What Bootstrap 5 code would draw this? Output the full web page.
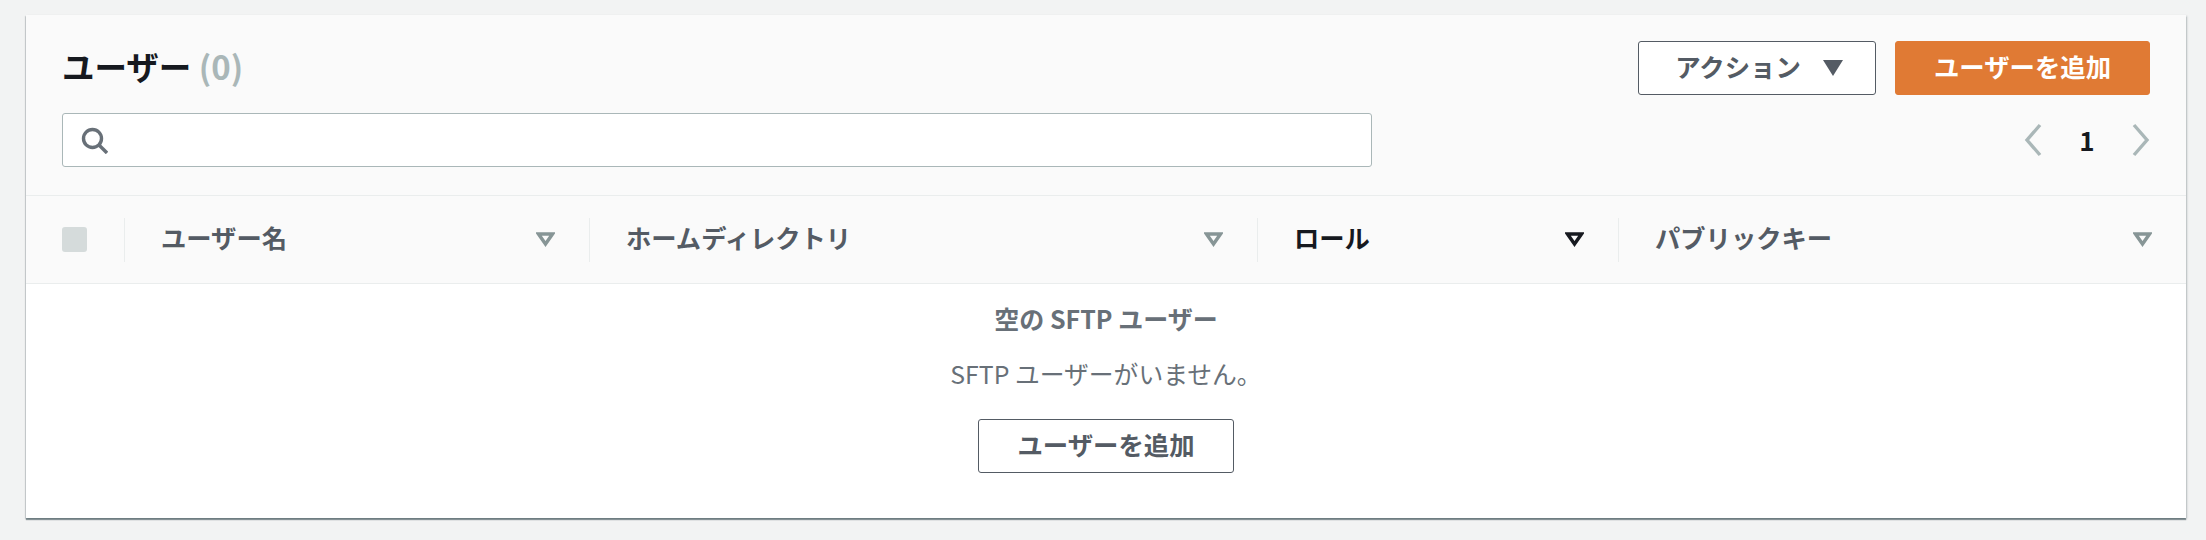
<!DOCTYPE html>
<html lang="ja">
<head>
<meta charset="utf-8">
<title>ユーザー</title>
<link rel="stylesheet" href="https://cdn.jsdelivr.net/npm/bootstrap@5.3.0/dist/css/bootstrap.min.css">
<style>
html,body{height:540px;overflow:hidden}
body{background:#f2f3f3;font-family:"Noto Sans CJK JP","Noto Sans",sans-serif;color:#16191f;padding:15px 20px 0 26px}
.panel{width:2160px;height:503px;background:#fff;border:0;border-radius:0;box-shadow:0 2px 1px 0 rgba(0,28,36,.4),1px 1px 2px 0 rgba(0,28,36,.2),-1px 1px 1px 0 rgba(0,28,36,.12)}
.panel-top{background:#fafafa;padding:26px 36px 28px 36px;border-bottom:1px solid #eaeded}
.title-row{height:54px}
.panel-title{font-size:32.500px;line-height:50px;height:54px;font-weight:700;margin:0;color:#16191f}
.panel-count{color:#aab7b8;font-weight:700;font-size:33px}
.aws-btn{height:54px;font-size:25.400px;font-weight:700;line-height:1;border-radius:3px;padding:0 0 3px;display:inline-flex;align-items:center;justify-content:center;font-family:inherit}
.btn-act{width:238px;background:#fff;color:#545b64;border:1.5px solid #545b64}
.btn-act:hover{background:#fff;color:#545b64}
.btn-act svg{margin-left:22px;margin-right:-4px;margin-top:3px}
.btn-add{width:255px;margin-left:19px;background:#e07a34;color:#fff;border:1px solid #e07a34}
.btn-add:hover{background:#e07a34;color:#fff}
.filter-row{margin-top:18px;height:54px}
.search-box{width:1310px;height:54px;background:#fff;border:1.5px solid #aab7b8;border-radius:3px;padding-left:18px}
.pager{width:126px;color:#16191f}
.pager-num{font-size:26px;font-weight:700;line-height:1}
.table-head{height:88px;background:#fafafa;border-bottom:1px solid #eaeded}
.cell{height:44px;border-left:1px solid #eaeded;font-size:25.300px;font-weight:700;color:#545b64;padding:0 34px 0 36px}
.cell span{margin-top:-4px}
.cell.active-col{color:#16191f}
.cell-check{width:98px;padding-left:36px}
.check-box{width:25px;height:25px;background:#d5dbdb;border-radius:3px}
.w-user{width:465px}.w-home{width:668px}.w-role{width:361px}.w-key{width:568px}
.empty-zone{padding-top:19px;color:#687078}
.empty-title{font-size:25px;font-weight:700;line-height:30px;margin:0;color:#687078}
.empty-text{font-size:24.800px;font-weight:400;line-height:30px;margin:25px 0 0;color:#687078}
.btn-empty{width:256px;background:#fff;color:#545b64;border:1.5px solid #545b64;margin-top:31px}
.btn-empty:hover{background:#fff;color:#545b64}
</style>
</head>
<body>
<div class="card panel">
  <div class="panel-top">
    <div class="d-flex justify-content-between align-items-center title-row">
      <h2 class="panel-title">ユーザー <span class="panel-count">(0)</span></h2>
      <div class="d-flex">
        <button class="btn aws-btn btn-act" type="button">アクション
          <svg width="20" height="16" viewBox="0 0 20 16"><path d="M0 0h20L10 16z" fill="#545b64"/></svg>
        </button>
        <button class="btn aws-btn btn-add" type="button">ユーザーを追加</button>
      </div>
    </div>
    <div class="d-flex justify-content-between align-items-center filter-row">
      <div class="d-flex align-items-center search-box">
        <svg width="27" height="27" viewBox="0 0 27 27" fill="none" stroke="#687078" stroke-width="3.400"><circle cx="11.500" cy="11.500" r="9"/><path d="M18 18l8 8"/></svg>
      </div>
      <div class="d-flex align-items-center justify-content-between pager">
        <svg width="18" height="34" viewBox="0 0 18 34" fill="none" stroke="#aab7b8" stroke-width="3.400"><path d="M16 2L3 17l13 15"/></svg>
        <span class="pager-num">1</span>
        <svg width="18" height="34" viewBox="0 0 18 34" fill="none" stroke="#aab7b8" stroke-width="3.400"><path d="M2 2l13 15L2 32"/></svg>
      </div>
    </div>
  </div>
  <div class="d-flex align-items-center table-head">
    <div class="d-flex align-items-center cell-check"><span class="check-box"></span></div>
    <div class="d-flex align-items-center justify-content-between cell w-user"><span>ユーザー名</span><svg width="19" height="15" viewBox="0 0 19 15" fill="none" stroke="#879596" stroke-width="3.400"><path d="M2.500 2h14L9.500 12z"/></svg></div>
    <div class="d-flex align-items-center justify-content-between cell w-home"><span>ホームディレクトリ</span><svg width="19" height="15" viewBox="0 0 19 15" fill="none" stroke="#879596" stroke-width="3.400"><path d="M2.500 2h14L9.500 12z"/></svg></div>
    <div class="d-flex align-items-center justify-content-between cell w-role active-col"><span>ロール</span><svg width="19" height="15" viewBox="0 0 19 15" fill="none" stroke="#16191f" stroke-width="3.400"><path d="M2.500 2h14L9.500 12z"/></svg></div>
    <div class="d-flex align-items-center justify-content-between cell w-key"><span>パブリックキー</span><svg width="19" height="15" viewBox="0 0 19 15" fill="none" stroke="#879596" stroke-width="3.400"><path d="M2.500 2h14L9.500 12z"/></svg></div>
  </div>
  <div class="d-flex flex-column align-items-center text-center empty-zone">
    <p class="empty-title">空の SFTP ユーザー</p>
    <p class="empty-text">SFTP ユーザーがいません。</p>
    <button class="btn aws-btn btn-empty" type="button">ユーザーを追加</button>
  </div>
</div>
<script src="https://cdn.jsdelivr.net/npm/bootstrap@5.3.0/dist/js/bootstrap.bundle.min.js"></script>
</body>
</html>
